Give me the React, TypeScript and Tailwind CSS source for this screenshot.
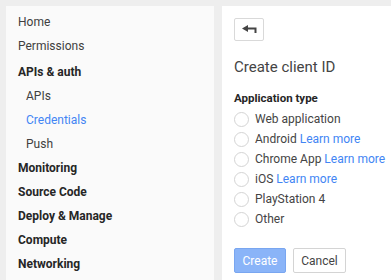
import React from 'react';

const navItems: { label: string; kind: 'top' | 'section' | 'sub' | 'active' }[] = [
  { label: 'Home', kind: 'top' },
  { label: 'Permissions', kind: 'top' },
  { label: 'APIs & auth', kind: 'section' },
  { label: 'APIs', kind: 'sub' },
  { label: 'Credentials', kind: 'active' },
  { label: 'Push', kind: 'sub' },
  { label: 'Monitoring', kind: 'section' },
  { label: 'Source Code', kind: 'section' },
  { label: 'Deploy & Manage', kind: 'section' },
  { label: 'Compute', kind: 'section' },
  { label: 'Networking', kind: 'section' },
];

const appTypes: { label: string; more?: boolean }[] = [
  { label: 'Web application' },
  { label: 'Android', more: true },
  { label: 'Chrome App', more: true },
  { label: 'iOS', more: true },
  { label: 'PlayStation 4' },
  { label: 'Other' },
];

export default function App() {
  return (
    <div className="h-[280px] w-[391px] overflow-hidden bg-[#eeeeee] pl-[6px] pt-[6px] flex gap-[8px] font-['Roboto',sans-serif]">
      <nav className="w-[208px] shrink-0 bg-[#fafafa] pt-[4px] pl-[12px] flex flex-col">
        {navItems.map((item, i) => (
          <div
            key={item.label}
            className={
              item.kind === 'section'
                ? `h-[24px] flex items-center text-[12px] font-bold text-[#262626] ${i === 2 ? 'mt-[2px]' : ''}`
                : item.kind === 'top'
                ? 'h-[24px] flex items-center text-[12px] text-[#404040]'
                : item.kind === 'active'
                ? 'h-[24px] flex items-center text-[12px] pl-[8px] text-[#4285f4]'
                : 'h-[24px] flex items-center text-[12px] pl-[8px] text-[#404040]'
            }
          >
            {item.label}
          </div>
        ))}
      </nav>

      <main className="flex-1 bg-white pt-[12px] pl-[12px] flex flex-col">
        <button className="w-[30px] h-[23px] border border-[#d9d9d9] rounded-[2px] bg-white flex items-center justify-center">
          <svg width="15" height="10" viewBox="0 0 15 10">
            <polygon points="0,3.5 6,0 6,7" fill="#444" />
            <path d="M5 3.5 H13.5 V8" stroke="#444" strokeWidth="2" fill="none" />
          </svg>
        </button>

        <h1 className="mt-[16px] h-[20px] leading-[20px] text-[15px] text-[#444]">Create client ID</h1>

        <div className="mt-[13px] h-[16px] leading-[16px] text-[11.5px] font-bold text-[#262626]">Application type</div>

        <div className="mt-[3px] flex flex-col">
          {appTypes.map((t) => (
            <label key={t.label} className="h-[20px] flex items-center gap-[6px] text-[12px] text-[#444] whitespace-nowrap">
              <span className="w-[15px] h-[15px] rounded-full border border-[#d4d4d4] bg-white shrink-0" />
              <span>
                {t.label}
                {t.more && <span className="text-[#4285f4]"> Learn more</span>}
              </span>
            </label>
          ))}
        </div>

        <div className="mt-[19px] flex gap-[7px]">
          <button className="w-[52px] h-[25px] rounded-[2px] border border-[#79a6f0] bg-[#8ab4f8] text-white text-[12px]">
            Create
          </button>
          <button className="w-[53px] h-[25px] rounded-[2px] border border-[#d4d4d4] bg-white text-[#444] text-[12px]">
            Cancel
          </button>
        </div>
      </main>
    </div>
  );
}
